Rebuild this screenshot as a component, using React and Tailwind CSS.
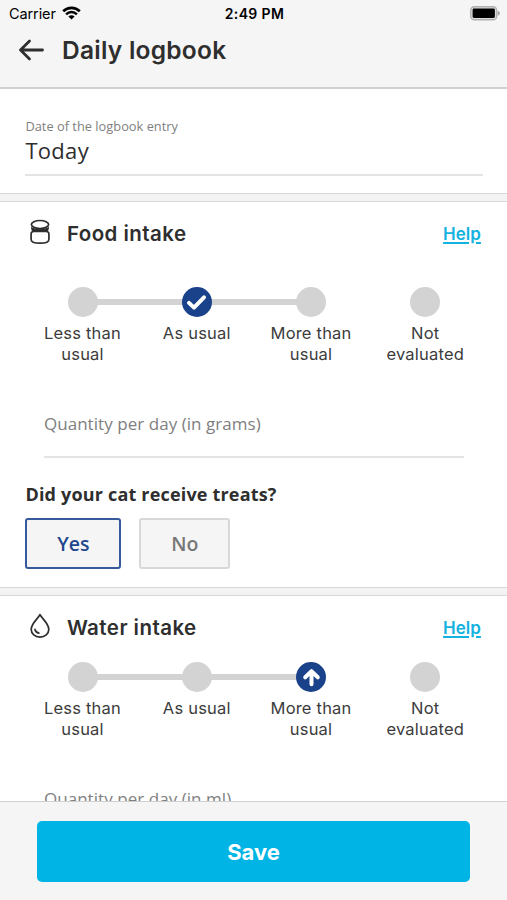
// frontend/src/App.jsx
import React, { useState } from 'react';

function StatusBar() {
  return (
    <div className="grid h-7 grid-cols-3 items-center pl-[9px] pr-[7px] text-black font-['Inter',sans-serif]">
      <div className="flex items-center text-[14.5px]">
        <span className="tracking-[-0.1px]">Carrier</span>
        <svg className="ml-[6px] h-[14px] w-[19px] -mt-0.5" viewBox="0 0 19 14" fill="none" stroke="currentColor">
          <path d="M1.2 5.2a11.8 11.8 0 0 1 16.6 0" strokeWidth="2.7" />
          <path d="M4.1 8.3a7.7 7.7 0 0 1 10.8 0" strokeWidth="2.5" />
          <path d="M9.5 13.6 6.4 10.5a4.4 4.4 0 0 1 6.2 0Z" fill="currentColor" stroke="none" />
        </svg>
      </div>
      <div className="-mt-px text-center text-[14px] font-semibold tracking-[0.35px] whitespace-nowrap">2:49 PM</div>
      <svg className="-mt-px h-[15px] w-[31px] justify-self-end" viewBox="0 0 31 15">
        <rect x="1.7" y="0.8" width="26" height="13" rx="3.6" fill="#dcdcdc" stroke="#b0b0b0" strokeWidth="1.4" />
        <rect x="3.6" y="2.6" width="22.3" height="9.4" rx="1.4" fill="#000" />
        <path d="M28.7 4.8c1.6.5 2.2 1.4 2.2 2.5s-.6 2-2.2 2.5Z" fill="#a5a5a5" />
      </svg>
    </div>
  );
}

function Header() {
  return (
    <header className="h-[89px] shrink-0 border-b-2 border-[#d0d0d0] bg-[#f5f5f5]">
      <StatusBar />
      <div className="flex h-[45px] items-center pl-[18px]">
        <svg className="-mt-0.5 h-[22px] w-[27px]" viewBox="0 0 27 22" fill="none" stroke="#2e2e2e" strokeWidth="2.8" strokeLinecap="round" strokeLinejoin="round">
          <path d="M24.5 11H2.5M11.500 2l-9 9 9 9" />
        </svg>
        <h1 className="ml-[17px] text-[24.5px] font-semibold tracking-[0.25px] text-[#2e2e2e] font-['Inter',sans-serif]">Daily logbook</h1>
      </div>
    </header>
  );
}

function JarIcon() {
  return (
    <svg className="-mt-1 h-[26px] w-5" viewBox="0 0 20 26" fill="none" stroke="#2e2e2e" strokeWidth="1.7">
      <ellipse cx="10" cy="5.5" rx="8.6" ry="4" />
      <path d="M1 7.5c2 3 16 3 18 0 0 2.8-.8 5.200-2.500 5.600H3.500C1.800 12.700 1 10.300 1 7.500Z" fill="#2e2e2e" stroke="none" />
      <path d="M3.500 12.300c-1.600.3-2.400 1-2.400 2.500v5.700c0 2.500 4 3.700 8.900 3.700s8.900-1.200 8.900-3.700v-5.700c0-1.500-.8-2.200-2.400-2.500Z" />
    </svg>
  );
}

function DropIcon() {
  return (
    <svg className="-mt-1 h-[26px] w-5" viewBox="0 0 20 26" fill="none" stroke="#2e2e2e" strokeWidth="1.7" strokeLinecap="round" strokeLinejoin="round">
      <path d="M10 1.6C8.5 5 1.2 10.500 1.2 16.200c0 4.600 3.900 8 8.800 8s8.800-3.400 8.800-8C18.800 10.500 11.500 5 10 1.600Z" />
      <path d="M5 16.400c.3 1.900 1.700 3.400 3.900 3.800" />
    </svg>
  );
}

function CheckMark() {
  return (
    <svg className="h-[29px] w-[29px]" viewBox="0 0 29 29" fill="none" stroke="#fff" strokeWidth="4" strokeLinecap="round" strokeLinejoin="round">
      <path d="M7 14.900l5 4.700L22 9.300" />
    </svg>
  );
}

function UpArrow() {
  return (
    <svg className="h-[29px] w-[29px]" viewBox="0 0 29 29" fill="none" stroke="#fff" strokeWidth="4" strokeLinecap="round" strokeLinejoin="round">
      <path d="M14.500 21.300V9M8.200 14.300l6.300-6.100 6.300 6.100" />
    </svg>
  );
}

const steps = [
  { id: 'less', label: 'Less than usual', mark: <UpArrow /> },
  { id: 'usual', label: 'As usual', mark: <CheckMark /> },
  { id: 'more', label: 'More than usual', mark: <UpArrow /> },
  { id: 'none', label: 'Not evaluated', mark: <CheckMark /> },
];

function StepPicker({ value, onChange }) {
  return (
    <div className="grid grid-cols-4 font-['Inter',sans-serif]">
      {steps.map((step, index) => (
        <button key={step.id} type="button" onClick={() => onChange(step.id)} className="flex flex-col items-center">
          {/* Dot with its half of the track on each side */}
          <span className="flex w-full items-center">
            <span className={`h-[6px] flex-1 ${index === 1 || index === 2 ? 'bg-[#d3d3d3]' : ''}`} />
            <span className={`relative -mx-px h-[30px] w-[30px] rounded-full flex items-center justify-center ${
              value === step.id ? 'bg-[#1a428a]' : 'bg-[#d3d3d3]'
            }`}>
              {value === step.id && step.mark}
            </span>
            <span className={`h-[6px] flex-1 ${index < 2 ? 'bg-[#d3d3d3]' : ''}`} />
          </span>
          <span className="mt-1.5 w-[90px] text-[16.5px] leading-[21px] tracking-[0.2px] text-[#3c3c3c]">{step.label}</span>
        </button>
      ))}
    </div>
  );
}

function SectionTitle({ icon, title }) {
  return (
    <div className="flex items-center pl-[4.5px]">
      {icon}
      <h2 className="ml-[17px] flex-1 text-[20.5px] leading-7 font-semibold tracking-[0.45px] text-[#2e2e2e] font-['Inter',sans-serif]">{title}</h2>
      <a href="#help" className="mt-0.5 mr-[1.5px] text-[17px] font-semibold text-[#13b2df] underline decoration-2 underline-offset-2 font-['Inter',sans-serif]">Help</a>
    </div>
  );
}

function Quantity({ unit }) {
  return (
    <div className="mx-[18.5px] h-[46px] border-b-2 border-[#e4e4e4] text-[17px] leading-6 tracking-[0.05px] text-[#808080]">
      Quantity per day (in {unit})
    </div>
  );
}

function App() {
  const [food, setFood] = useState('usual');
  const [water, setWater] = useState('more');
  const [treats, setTreats] = useState(true);

  return (
    <div className="flex h-[900px] w-full flex-col overflow-hidden bg-[#f3f3f3] font-['Open_Sans',sans-serif]">
      <Header />

      <main className="min-h-0 flex-1 overflow-hidden">
        <section className="h-[105px] border-b border-[#d8d8d8] bg-white pr-[24.5px] pl-[25.4px] pt-7">
          <div className="h-[59px] border-b-2 border-[#e4e4e4]">
            <div className="text-[12.8px] leading-[18px] tracking-[0.02px] text-[#808080]">Date of the logbook entry</div>
            <div className="text-[22px] leading-[30px] font-medium tracking-[0.3px] text-[#2e2e2e]">Today</div>
          </div>
        </section>

        <section className="mt-[7px] h-[387px] border-y border-[#d8d8d8] bg-white pr-[24.6px] pl-[25.4px] pt-[18px]">
          <SectionTitle icon={<JarIcon />} title="Food intake" />
          <div className="mt-[39px]">
            <StepPicker value={food} onChange={setFood} />
          </div>
          <div className="mt-[47px]">
            <Quantity unit="grams" />
          </div>
          <p className="mt-6 text-[18px] leading-6 font-bold tracking-[0.18px] text-[#2e2e2e]">Did your cat receive treats?</p>
          <div className="mt-3 flex gap-[18px]">
            <button
              type="button"
              onClick={() => setTreats(true)}
              className={`h-[51px] w-24 rounded-[3px] border-2 bg-[#f5f5f5] pt-px text-[19.5px] font-semibold ${
                treats ? 'border-[#365a9b] text-[#1f478e]' : 'border-[#d8d8d8] text-[#777]'
              }`}
            >
              Yes
            </button>
            <button
              type="button"
              onClick={() => setTreats(false)}
              className={`h-[51px] w-[91px] rounded-[3px] border-2 bg-[#f5f5f5] pt-px text-[19.5px] font-semibold ${
                treats ? 'border-[#d8d8d8] text-[#777]' : 'border-[#365a9b] text-[#1f478e]'
              }`}
            >
              No
            </button>
          </div>
        </section>

        <section className="mt-[7px] h-[387px] border-t border-[#d8d8d8] bg-white pr-[24.6px] pl-[25.4px] pt-[18px]">
          <SectionTitle icon={<DropIcon />} title="Water intake" />
          <div className="mt-5">
            <StepPicker value={water} onChange={setWater} />
          </div>
          <div className="mt-[47px]">
            <Quantity unit="ml" />
          </div>
        </section>
      </main>

      <footer className="h-[99px] shrink-0 border-t border-[#d0d0d0] bg-[#f5f5f5] px-[37px] pt-[19px]">
        <button type="button" className="h-[61px] w-full rounded-[5px] bg-[#00b5e5] pt-0.5 text-[22px] font-bold text-white font-['Inter',sans-serif]">Save</button>
      </footer>
    </div>
  );
}

export default App;
